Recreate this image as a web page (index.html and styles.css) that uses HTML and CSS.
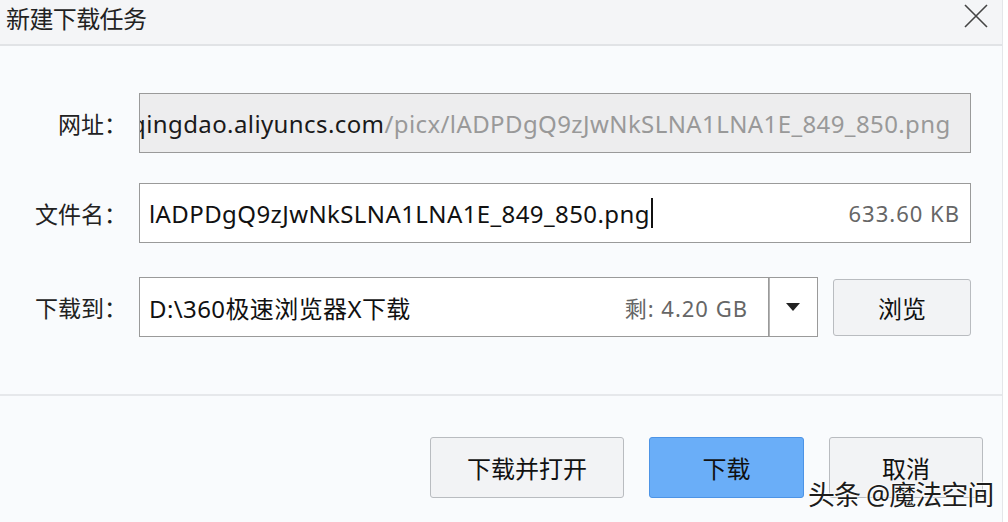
FILE: index.html
```html
<!DOCTYPE html>
<html lang="zh-CN">
<head>
    <meta charset="UTF-8">
    <meta name="viewport" content="width=device-width, initial-scale=1.0">
    <title>新建下载任务</title>
    <link rel="stylesheet" href="styles.css">
</head>
<body>
    <div class="dialog">
        <div class="titlebar">
            <span class="title">新建下载任务</span>
            <svg class="close" width="26" height="24" viewBox="0 0 26 24">
                <path d="M2 1 L24 23 M24 1 L2 23" stroke="#444" stroke-width="1.6" fill="none"/>
            </svg>
        </div>

        <div class="form">
            <div class="row">
                <label class="label">网址：</label>
                <div class="field field-readonly">
                    <div class="url"><span class="url-host">qingdao.aliyuncs.com</span><span class="url-path">/picx/lADPDgQ9zJwNkSLNA1LNA1E_849_850.png</span></div>
                </div>
            </div>
            <div class="row row-name">
                <label class="label">文件名：</label>
                <div class="field">
                    <span class="value">lADPDgQ9zJwNkSLNA1LNA1E_849_850.png<span class="caret"></span></span>
                    <span class="hint">633.60 KB</span>
                </div>
            </div>
            <div class="row row-dir">
                <label class="label">下载到：</label>
                <div class="field field-dir">
                    <span class="value">D:\360极速浏览器X下载</span>
                    <span class="hint">剩: 4.20 GB</span>
                </div>
                <div class="dropdown">
                    <svg width="14" height="8" viewBox="0 0 14 8"><path d="M0 0 H14 L7 8 Z" fill="#222"/></svg>
                </div>
                <button class="btn btn-browse">浏览</button>
            </div>
        </div>

        <div class="footer">
            <button class="btn btn-open">下载并打开</button>
            <button class="btn btn-primary">下载</button>
            <button class="btn btn-cancel">取消</button>
        </div>

        <div class="watermark">头条 @魔法空间</div>
    </div>
</body>
</html>
```

FILE: styles.css
```css
body {
    margin: 0;
    padding: 0;
    background: #fff;
    font-family: "Noto Sans", "Noto Sans CJK SC", sans-serif;
    color: #1a1a1a;
}
.dialog {
    position: relative;
    width: 1003px;
    height: 522px;
    box-sizing: border-box;
    background: #f9fbfd;
    border-right: 1px solid #e4e6e9;
    display: flex;
    flex-direction: column;
    overflow: hidden;
}
.titlebar {
    height: 44px;
    flex: none;
    display: flex;
    justify-content: space-between;
    align-items: flex-start;
    padding: 0 13px 0 6px;
    background: #f4f5f7;
    border-bottom: 2px solid #e1e3e6;
}
.title {
    font-size: 24px;
    line-height: 38px;
    color: #222;
    letter-spacing: -0.6px;
}
.close {
    margin-top: 4px;
}
.form {
    flex: none;
    height: 348px;
    box-sizing: border-box;
    padding-top: 47px;
}
.row {
    display: flex;
    align-items: center;
    height: 60px;
}
.row-name {
    margin-top: 30px;
}
.row-dir {
    margin-top: 34px;
}
.label {
    width: 127px;
    margin-right: 12px;
    text-align: right;
    font-size: 23px;
    color: #222;
    flex: none;
}
.field {
    width: 832px;
    height: 60px;
    box-sizing: border-box;
    border: 1px solid #9a9a9a;
    background: #fff;
    display: flex;
    align-items: center;
    justify-content: space-between;
    padding: 0 10px 0 9px;
    font-size: 24px;
    letter-spacing: 0.4px;
    overflow: hidden;
    white-space: nowrap;
}
.field-readonly {
    background: #ededee;
    padding-left: 0;
}
.url {
    margin-left: -9px;
}
.url-host {
    color: #1a1a1a;
}
.url-path {
    color: #999;
}
.value {
    color: #111;
    display: flex;
    align-items: center;
}
.caret {
    display: inline-block;
    width: 2px;
    height: 30px;
    margin-left: 1px;
    background: #111;
}
.hint {
    color: #666;
    font-size: 22px;
    letter-spacing: 1px;
}
.field-dir {
    width: 630px;
    padding-right: 20px;
}
.dropdown {
    width: 49px;
    height: 60px;
    box-sizing: border-box;
    border: 1px solid #9a9a9a;
    border-left: none;
    background: #fff;
    display: flex;
    align-items: center;
    justify-content: center;
    box-shadow: inset 1px 0 0 #b5b5b5;
}
.btn {
    font-family: "Noto Sans", "Noto Sans CJK SC", sans-serif;
    font-size: 24px;
    color: #111;
    background: #f2f3f5;
    border: 1px solid #b9bcc0;
    border-radius: 3px;
    cursor: pointer;
    padding: 0;
}
.btn-browse {
    width: 138px;
    height: 57px;
    margin-left: 15px;
}
.footer {
    flex: 1;
    display: flex;
    justify-content: flex-end;
    align-items: flex-start;
    gap: 25px;
    padding: 41px 19px 0 0;
    border-top: 2px solid #e6e8eb;
}
.btn-open {
    width: 194px;
    height: 61px;
}
.btn-primary {
    width: 155px;
    height: 61px;
    background: #6aaef8;
    border-color: #4d94e6;
}
.btn-cancel {
    width: 154px;
    height: 61px;
}
.watermark {
    position: absolute;
    left: 808px;
    top: 480px;
    font-size: 27px;
    line-height: 30px;
    color: #1c1c1c;
    letter-spacing: -1px;
    text-shadow: 0 0 2px #fff, 0 0 2px #fff, 0 0 3px #fff;
}
```
